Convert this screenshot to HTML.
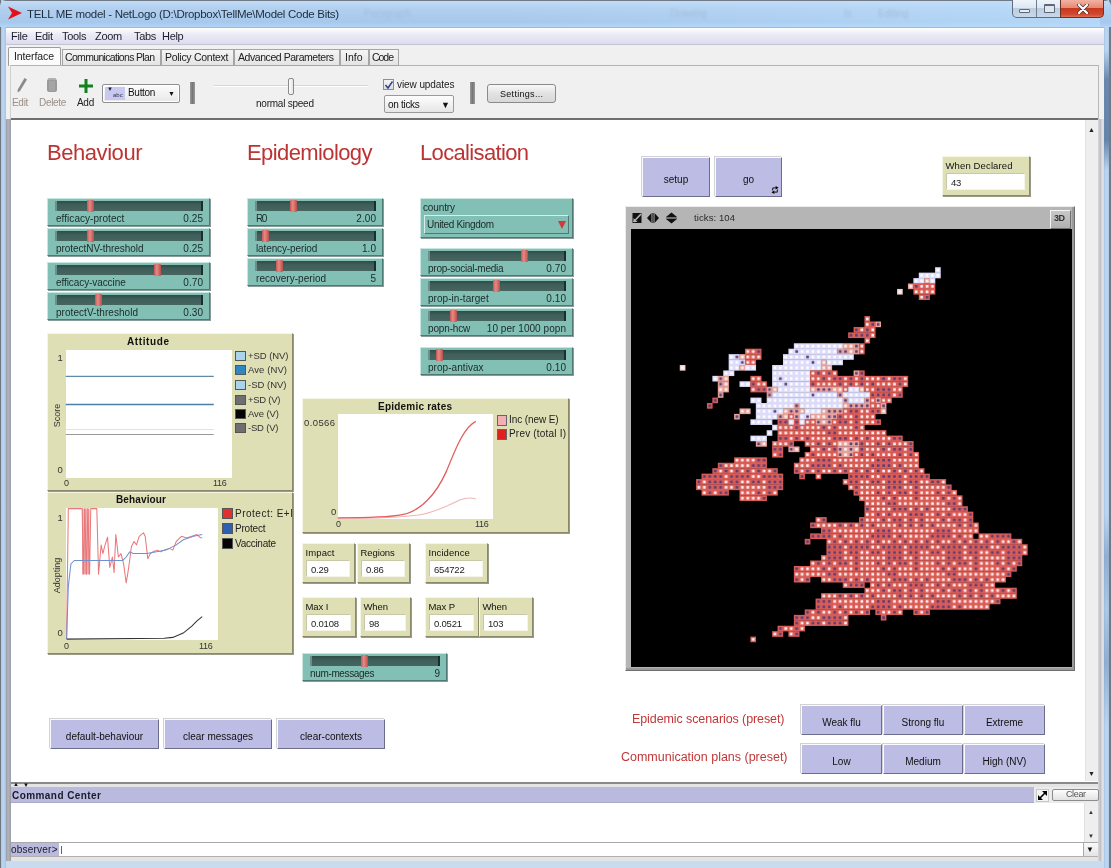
<!DOCTYPE html>
<html><head><meta charset="utf-8"><style>
*{box-sizing:border-box;margin:0;padding:0}
html,body{width:1111px;height:868px;overflow:hidden;background:#c9dcef;font-family:"Liberation Sans",sans-serif;font-size:10px;color:#000}
.a{position:absolute}
.t{position:absolute;white-space:nowrap;line-height:1}
.sl{position:absolute;background:#82bfb4;border:1px solid;border-color:#c9e6e0 #4f7a73 #4f7a73 #c9e6e0;box-shadow:1px 1px 0 #8a9a98}
.trk{position:absolute;background:linear-gradient(#2f4d48,#3f5f5a 40%,#46655f);border-left:2px solid #6f8e89;border-right:2px solid #1c2e2b}
.th{position:absolute;width:7px;background:linear-gradient(90deg,#c25858,#e68a84 40%,#d46b66 70%,#b55050);border-radius:1px}
.btn{position:absolute;background:#bcbce4;border:1px solid;border-color:#fafaff #6c6c8c #6c6c8c #fafaff;box-shadow:-1px -1px 0 #d2d2d2;text-align:center;font-size:10px;color:#111}
.mon{position:absolute;background:#dfdfb6;border:1px solid;border-color:#f6f6e4 #8a8a6a #8a8a6a #f6f6e4;box-shadow:1px 1px 0 #9a9a88}
.mval{position:absolute;background:#fff;border:1px solid;border-color:#c8c8a8 #f4f4e8 #f4f4e8 #c8c8a8}
.plot{position:absolute;background:#dfdfb6;border:1px solid;border-color:#f6f6e4 #8a8a6a #8a8a6a #f6f6e4;box-shadow:1px 1px 0 #9a9a88}
.pw{position:absolute;background:#fff}
.lg{position:absolute;width:11px;height:11px;border:1px solid #555}
</style></head><body>
<div style="position:absolute;left:0;top:0;width:1111px;height:868px;overflow:hidden;filter:blur(0.35px)">
<div class="a" style="left:0;top:0;width:1111px;height:868px;background:linear-gradient(90deg,#6f7680 0,#6f7680 1px,#a8c6e6 1px,#bcd8f4 3px,#a8c4e4 6px,transparent 6px,transparent 1104px,#a8c4e0 1104px,#bcd8f4 1106px,#b0cce8 1109px,#6f7a86 1109px)"></div>
<div class="a" style="left:0;top:0;width:1111px;height:27px;background:linear-gradient(#6f7a86 0,#6f7a86 1px,#c2dcf6 1px,#b2d0f0 8px,#a6c8ec 22px,#b4d4f4 27px);border-radius:6px 6px 0 0"></div>
<div class="a" style="left:500px;top:1px;width:600px;height:26px;background:linear-gradient(90deg,rgba(190,225,255,0),rgba(190,225,255,0.55))"></div>
<svg class="a" style="left:7px;top:5px" width="16" height="16" viewBox="0 0 16 16"><path d="M1 1.5 L15 8 L1 14.5 L5 8 Z" fill="#e3121a"/></svg>
<div class="t" style="left:27px;top:9px;font-size:11.5px;color:#1e2b3b;;letter-spacing:-0.286px">TELL ME model - NetLogo (D:\Dropbox\TellMe\Model Code Bits)</div>
<div class="a" style="left:1012px;top:0px;width:92px;height:18px;border:1px solid #5f6d7e;border-top:none;border-radius:0 0 5px 5px;background:linear-gradient(#eef4fa,#dde8f3 45%,#bccde0 50%,#c8d8ea)"></div>
<div class="a" style="left:1036px;top:0px;width:1px;height:17px;background:#6f7d8d"></div>
<div class="a" style="left:1060px;top:0px;width:44px;height:18px;border:1px solid #6a3226;border-top:none;border-radius:0 0 5px 0;background:linear-gradient(#f2b2a2,#e58a74 45%,#c8381e 50%,#d04a30 85%,#e07050)"></div>
<div class="a" style="left:1019px;top:9px;width:11px;height:4px;border:1px solid #5c6878;border-radius:1px;background:#e8ecf0"></div>
<div class="a" style="left:1044px;top:4px;width:11px;height:9px;border:1px solid #5c6878;border-top-width:2px;border-radius:1px;background:#dfe6ee"></div>
<svg class="a" style="left:1077px;top:4px" width="12" height="10" viewBox="0 0 12 10"><path d="M2 1 L10 9 M10 1 L2 9" stroke="#4a3030" stroke-width="3.6" stroke-linecap="round"/><path d="M2 1 L10 9 M10 1 L2 9" stroke="#fff" stroke-width="2.2" stroke-linecap="round"/></svg>
<div class="t" style="left:364px;top:9px;font-size:10px;color:#a4bfd8;filter:blur(1.3px);width:48px;overflow:hidden">Paragraph</div>
<div class="t" style="left:670px;top:9px;font-size:10px;color:#a4bfd8;filter:blur(1.3px);width:38px;overflow:hidden">Drawing</div>
<div class="t" style="left:844px;top:9px;font-size:10px;color:#a4bfd8;filter:blur(1.3px);width:8px;overflow:hidden">Is</div>
<div class="t" style="left:878px;top:9px;font-size:10px;color:#a4bfd8;filter:blur(1.3px);width:38px;overflow:hidden">Editing</div>
<div class="a" style="left:1104px;top:50px;width:5px;height:120px;background:linear-gradient(rgba(100,132,172,0),#6a88ae 25%,#6584ab 75%,rgba(100,132,172,0))"></div>
<div class="a" style="left:1104px;top:515px;width:5px;height:210px;background:linear-gradient(rgba(120,150,190,0),rgba(120,150,190,0.6) 20%,rgba(120,150,190,0.2) 45%,rgba(120,150,190,0.6) 70%,rgba(120,150,190,0))"></div>
<div class="a" style="left:6px;top:27px;width:1098px;height:18px;background:linear-gradient(#ffffff,#ebebf6 40%,#dcdcee);border-top:1px solid #aab6c4;border-bottom:1px solid #c3c3d4"></div>
<div class="t" style="left:11px;top:31px;font-size:11px;color:#1d1d2e;letter-spacing:-0.3px">File</div>
<div class="t" style="left:35px;top:31px;font-size:11px;color:#1d1d2e;letter-spacing:-0.3px">Edit</div>
<div class="t" style="left:62px;top:31px;font-size:11px;color:#1d1d2e;letter-spacing:-0.3px">Tools</div>
<div class="t" style="left:95px;top:31px;font-size:11px;color:#1d1d2e;letter-spacing:-0.3px">Zoom</div>
<div class="t" style="left:134px;top:31px;font-size:11px;color:#1d1d2e;letter-spacing:-0.3px">Tabs</div>
<div class="t" style="left:162px;top:31px;font-size:11px;color:#1d1d2e;letter-spacing:-0.3px">Help</div>
<div class="a" style="left:6px;top:45px;width:1098px;height:816px;background:#f0f0f0"></div>
<div class="a" style="left:6px;top:119px;width:5px;height:742px;background:linear-gradient(90deg,#9a9aa2,#b4b4bc 40%,#9c9ca4)"></div>
<div class="a" style="left:1098px;top:119px;width:6px;height:742px;background:linear-gradient(90deg,#d8d8dc,#bdbdc4 40%,#e2e2e6 70%,#dadadf)"></div>
<div class="a" style="left:62px;top:49px;width:99px;height:16px;border:1px solid #a5a5a5;border-bottom:none;background:linear-gradient(#f5f5f5,#e4e4e4)"></div>
<div class="t" style="left:65px;top:52px;font-size:10.5px;color:#202020;;letter-spacing:-0.675px">Communications Plan</div>
<div class="a" style="left:161px;top:49px;width:73px;height:16px;border:1px solid #a5a5a5;border-bottom:none;background:linear-gradient(#f5f5f5,#e4e4e4)"></div>
<div class="t" style="left:165px;top:52px;font-size:10.5px;color:#202020;;letter-spacing:-0.279px">Policy Context</div>
<div class="a" style="left:234px;top:49px;width:106px;height:16px;border:1px solid #a5a5a5;border-bottom:none;background:linear-gradient(#f5f5f5,#e4e4e4)"></div>
<div class="t" style="left:238px;top:52px;font-size:10.5px;color:#202020;;letter-spacing:-0.441px">Advanced Parameters</div>
<div class="a" style="left:340px;top:49px;width:29px;height:16px;border:1px solid #a5a5a5;border-bottom:none;background:linear-gradient(#f5f5f5,#e4e4e4)"></div>
<div class="t" style="left:345px;top:52px;font-size:10.5px;color:#202020;;letter-spacing:0.023px">Info</div>
<div class="a" style="left:369px;top:49px;width:30px;height:16px;border:1px solid #a5a5a5;border-bottom:none;background:linear-gradient(#f5f5f5,#e4e4e4)"></div>
<div class="t" style="left:372px;top:52px;font-size:10.5px;color:#202020;;letter-spacing:-1.036px">Code</div>
<div class="a" style="left:8px;top:47px;width:53px;height:19px;border:1px solid #9c9c9c;border-bottom:none;border-radius:2px 2px 0 0;background:#fbfbfb"></div>
<div class="t" style="left:14px;top:51px;font-size:10.5px;color:#202020;;letter-spacing:-0.111px">Interface</div>
<div class="a" style="left:10px;top:65px;width:1089px;height:54px;border-top:1px solid #b4b4b4;border-left:1px solid #d0d0d0;border-right:1px solid #b8b8b8;background:#f0f0f0"></div>
<div class="a" style="left:62px;top:65px;width:337px;height:1px;background:#a5a5a5"></div>
<svg class="a" style="left:15px;top:77px" width="13" height="16" viewBox="0 0 13 16"><path d="M9.5 1 L12 2.5 L5 14 L2.5 15.5 L2.8 12.5 Z" fill="#8a8a8a"/></svg>
<div class="t" style="left:12px;top:98px;font-size:10px;color:#9a8f86;letter-spacing:-0.3px">Edit</div>
<svg class="a" style="left:46px;top:77px" width="12" height="16" viewBox="0 0 12 16"><rect x="1" y="2" width="10" height="13" rx="2" fill="#9a9a9a"/><rect x="2" y="1" width="8" height="2" rx="1" fill="#b0b0b0"/><path d="M4 4 V14 M6 4 V14 M8 4 V14" stroke="#b8b8b8" stroke-width="0.8"/></svg>
<div class="t" style="left:39px;top:98px;font-size:10px;color:#9a8f86;letter-spacing:-0.3px">Delete</div>
<svg class="a" style="left:79px;top:79px" width="14" height="14" viewBox="0 0 14 14"><path d="M5.5 0 H8.5 V5.5 H14 V8.5 H8.5 V14 H5.5 V8.5 H0 V5.5 H5.5 Z" fill="#14801e"/></svg>
<div class="t" style="left:77px;top:98px;font-size:10px;color:#222;letter-spacing:-0.3px">Add</div>
<div class="a" style="left:102px;top:84px;width:78px;height:19px;border:1px solid #8f8f8f;border-radius:2px;background:linear-gradient(#fcfcfc,#e8e8e8);box-shadow:inset 0 0 0 1px #fff"></div>
<div class="a" style="left:105px;top:87px;width:20px;height:13px;background:#c8c8f0"></div>
<div class="t" style="left:107px;top:86px;font-size:6px;color:#223">&#9660;</div>
<div class="t" style="left:113px;top:92px;font-size:6px;color:#334;">abc</div>
<div class="t" style="left:128px;top:88px;font-size:10px;color:#111;letter-spacing:-0.3px">Button</div>
<div class="t" style="left:168px;top:90px;font-size:7px;color:#111">&#9660;</div>
<div class="a" style="left:190px;top:82px;width:5px;height:22px;background:linear-gradient(90deg,#9a9a9a,#777 50%,#999)"></div>
<div class="a" style="left:214px;top:85px;width:154px;height:2px;background:#d6d6d6;border-bottom:1px solid #fff"></div>
<div class="a" style="left:288px;top:78px;width:6px;height:17px;border:1px solid #8a8a8a;border-radius:2px;background:linear-gradient(90deg,#fff,#e4e4e4)"></div>
<div class="t" style="left:256px;top:99px;font-size:10px;color:#222;;letter-spacing:-0.236px">normal speed</div>
<div class="a" style="left:383px;top:79px;width:11px;height:11px;border:1px solid #8e8f8f;background:linear-gradient(#f4f4f4,#dedede)"></div>
<svg class="a" style="left:384px;top:80px" width="10" height="10" viewBox="0 0 10 10"><path d="M1.5 5 L4 8 L8.5 1.5" stroke="#2c3c8c" stroke-width="1.4" fill="none"/></svg>
<div class="t" style="left:397px;top:80px;font-size:10px;color:#222;;letter-spacing:-0.080px">view updates</div>
<div class="a" style="left:384px;top:95px;width:70px;height:18px;border:1px solid #9a9a9a;border-radius:2px;background:linear-gradient(#fdfdfd,#e6e6e6)"></div>
<div class="t" style="left:388px;top:100px;font-size:10px;color:#111;letter-spacing:-0.3px">on ticks</div>
<div class="t" style="left:441px;top:101px;font-size:9px;color:#111">&#9660;</div>
<div class="a" style="left:470px;top:82px;width:5px;height:22px;background:linear-gradient(90deg,#9a9a9a,#777 50%,#999)"></div>
<div class="a" style="left:487px;top:84px;width:69px;height:19px;border:1px solid #8a8a8a;border-radius:3px;background:linear-gradient(#f8f8f8,#e2e2e2 50%,#d8d8d8)"></div>
<div class="t" style="left:500px;top:90px;font-size:9px;color:#111;;letter-spacing:0.300px">Settings...</div>
<div class="a" style="left:11px;top:118px;width:1087px;height:664px;background:#fff;border-top:2px solid #6e6e6e"></div>
<div class="a" style="left:1085px;top:120px;width:13px;height:661px;background:#eeeeee;border-left:1px solid #e2e2e2"></div>
<div class="t" style="left:1088px;top:126px;font-size:7px;color:#222">&#9650;</div>
<div class="t" style="left:1088px;top:770px;font-size:7px;color:#222">&#9660;</div>
<div class="t" style="left:47px;top:142px;font-size:22px;color:#bd3333;;letter-spacing:-0.445px">Behaviour</div>
<div class="t" style="left:247px;top:142px;font-size:22px;color:#bd3333;;letter-spacing:-0.598px">Epidemiology</div>
<div class="t" style="left:420px;top:142px;font-size:22px;color:#bd3333;;letter-spacing:-0.653px">Localisation</div>
<div class="sl" style="left:47px;top:198px;width:163px;height:28px"></div>
<div class="trk" style="left:55px;top:201px;width:148px;height:10px"></div>
<div class="th" style="left:87px;top:200px;height:12px"></div>
<div class="t" style="left:56px;top:214px;font-size:10px;color:#1a2a28;letter-spacing:0.05px">efficacy-protect</div>
<div class="t" style="right:908px;top:214px;font-size:10px;color:#1a2a28;letter-spacing:0.05px">0.25</div>
<div class="sl" style="left:47px;top:228px;width:163px;height:28px"></div>
<div class="trk" style="left:55px;top:231px;width:148px;height:10px"></div>
<div class="th" style="left:87px;top:230px;height:12px"></div>
<div class="t" style="left:56px;top:244px;font-size:10px;color:#1a2a28;;letter-spacing:-0.049px">protectNV-threshold</div>
<div class="t" style="right:908px;top:244px;font-size:10px;color:#1a2a28;letter-spacing:0.05px">0.25</div>
<div class="sl" style="left:47px;top:262px;width:163px;height:28px"></div>
<div class="trk" style="left:55px;top:265px;width:148px;height:10px"></div>
<div class="th" style="left:154px;top:264px;height:12px"></div>
<div class="t" style="left:56px;top:278px;font-size:10px;color:#1a2a28;;letter-spacing:-0.084px">efficacy-vaccine</div>
<div class="t" style="right:908px;top:278px;font-size:10px;color:#1a2a28;letter-spacing:0.05px">0.70</div>
<div class="sl" style="left:47px;top:292px;width:163px;height:28px"></div>
<div class="trk" style="left:55px;top:295px;width:148px;height:10px"></div>
<div class="th" style="left:95px;top:294px;height:12px"></div>
<div class="t" style="left:56px;top:308px;font-size:10px;color:#1a2a28;letter-spacing:0.05px">protectV-threshold</div>
<div class="t" style="right:908px;top:308px;font-size:10px;color:#1a2a28;letter-spacing:0.05px">0.30</div>
<div class="sl" style="left:247px;top:198px;width:136px;height:28px"></div>
<div class="trk" style="left:255px;top:201px;width:121px;height:10px"></div>
<div class="th" style="left:290px;top:200px;height:12px"></div>
<div class="t" style="left:256px;top:214px;font-size:10px;color:#1a2a28;;letter-spacing:-1.481px">R0</div>
<div class="t" style="right:735px;top:214px;font-size:10px;color:#1a2a28;letter-spacing:0.05px">2.00</div>
<div class="sl" style="left:247px;top:228px;width:136px;height:28px"></div>
<div class="trk" style="left:255px;top:231px;width:121px;height:10px"></div>
<div class="th" style="left:262px;top:230px;height:12px"></div>
<div class="t" style="left:256px;top:244px;font-size:10px;color:#1a2a28;;letter-spacing:-0.116px">latency-period</div>
<div class="t" style="right:735px;top:244px;font-size:10px;color:#1a2a28;letter-spacing:0.05px">1.0</div>
<div class="sl" style="left:247px;top:258px;width:136px;height:28px"></div>
<div class="trk" style="left:255px;top:261px;width:121px;height:10px"></div>
<div class="th" style="left:276px;top:260px;height:12px"></div>
<div class="t" style="left:256px;top:274px;font-size:10px;color:#1a2a28;letter-spacing:0.05px">recovery-period</div>
<div class="t" style="right:735px;top:274px;font-size:10px;color:#1a2a28;letter-spacing:0.05px">5</div>
<div class="sl" style="left:420px;top:198px;width:153px;height:40px"></div>
<div class="t" style="left:423px;top:203px;font-size:10px;color:#1a2a28;;letter-spacing:-0.133px">country</div>
<div class="a" style="left:424px;top:215px;width:145px;height:19px;background:#82bfb4;border:1px solid;border-color:#d6eeea #4f7a73 #4f7a73 #d6eeea"></div>
<div class="t" style="left:427px;top:220px;font-size:10px;color:#1a2a28;;letter-spacing:-0.320px">United Kingdom</div>
<svg class="a" style="left:558px;top:221px" width="8" height="8" viewBox="0 0 8 8"><path d="M0 0 H8 L4 8 Z" fill="#d03a3a"/></svg>
<div class="sl" style="left:420px;top:248px;width:153px;height:28px"></div>
<div class="trk" style="left:428px;top:251px;width:138px;height:10px"></div>
<div class="th" style="left:521px;top:250px;height:12px"></div>
<div class="t" style="left:428px;top:264px;font-size:10px;color:#1a2a28;;letter-spacing:-0.242px">prop-social-media</div>
<div class="t" style="right:545px;top:264px;font-size:10px;color:#1a2a28;letter-spacing:0.05px">0.70</div>
<div class="sl" style="left:420px;top:278px;width:153px;height:28px"></div>
<div class="trk" style="left:428px;top:281px;width:138px;height:10px"></div>
<div class="th" style="left:493px;top:280px;height:12px"></div>
<div class="t" style="left:428px;top:294px;font-size:10px;color:#1a2a28;letter-spacing:0.05px">prop-in-target</div>
<div class="t" style="right:545px;top:294px;font-size:10px;color:#1a2a28;letter-spacing:0.05px">0.10</div>
<div class="sl" style="left:420px;top:308px;width:153px;height:28px"></div>
<div class="trk" style="left:428px;top:311px;width:138px;height:10px"></div>
<div class="th" style="left:450px;top:310px;height:12px"></div>
<div class="t" style="left:428px;top:324px;font-size:10px;color:#1a2a28;;letter-spacing:-0.151px">popn-hcw</div>
<div class="t" style="right:545px;top:324px;font-size:10px;color:#1a2a28;letter-spacing:0.05px">10 per 1000 popn</div>
<div class="sl" style="left:420px;top:347px;width:153px;height:28px"></div>
<div class="trk" style="left:428px;top:350px;width:138px;height:10px"></div>
<div class="th" style="left:436px;top:349px;height:12px"></div>
<div class="t" style="left:428px;top:363px;font-size:10px;color:#1a2a28;letter-spacing:0.05px">prop-antivax</div>
<div class="t" style="right:545px;top:363px;font-size:10px;color:#1a2a28;letter-spacing:0.05px">0.10</div>
<div class="sl" style="left:302px;top:653px;width:145px;height:28px"></div>
<div class="trk" style="left:310px;top:656px;width:130px;height:10px"></div>
<div class="th" style="left:361px;top:655px;height:12px"></div>
<div class="t" style="left:310px;top:669px;font-size:10px;color:#1a2a28;;letter-spacing:-0.351px">num-messages</div>
<div class="t" style="right:671px;top:669px;font-size:10px;color:#1a2a28;letter-spacing:0.05px">9</div>
<div class="btn" style="left:642px;top:157px;width:68px;height:40px;line-height:43px">setup</div>
<div class="btn" style="left:715px;top:157px;width:67px;height:40px;line-height:43px">go</div>
<svg class="a" style="left:771px;top:186px" width="8" height="8" viewBox="0 0 8 8"><path d="M1.6 4.5 V2.8 Q1.6 1.8 2.6 1.8 H4.8" stroke="#333" stroke-width="1.3" fill="none"/><path d="M4.6 0 L7.6 1.8 L4.6 3.6 Z" fill="#000"/><path d="M6.4 3.5 V5.2 Q6.4 6.2 5.4 6.2 H3.2" stroke="#333" stroke-width="1.3" fill="none"/><path d="M3.4 4.4 L0.4 6.2 L3.4 8 Z" fill="#000"/></svg>
<div class="mon" style="left:942px;top:156px;width:88px;height:40px"></div>
<div class="t" style="left:945.5px;top:161px;font-size:9.5px;color:#111;;letter-spacing:0.129px">When Declared</div>
<div class="mval" style="left:946px;top:173px;width:79px;height:17px"></div>
<div class="t" style="left:951px;top:178px;font-size:9.5px;color:#222;letter-spacing:-0.2px">43</div>
<div class="mon" style="left:302px;top:543px;width:53px;height:40px"></div>
<div class="t" style="left:305.5px;top:548px;font-size:9.5px;color:#111;;letter-spacing:0.100px">Impact</div>
<div class="mval" style="left:306px;top:560px;width:44px;height:17px"></div>
<div class="t" style="left:311px;top:565px;font-size:9.5px;color:#222;letter-spacing:-0.2px">0.29</div>
<div class="mon" style="left:357px;top:543px;width:53px;height:40px"></div>
<div class="t" style="left:360.5px;top:548px;font-size:9.5px;color:#111;letter-spacing:-0.1px">Regions</div>
<div class="mval" style="left:361px;top:560px;width:44px;height:17px"></div>
<div class="t" style="left:366px;top:565px;font-size:9.5px;color:#222;letter-spacing:-0.2px">0.86</div>
<div class="mon" style="left:425px;top:543px;width:63px;height:40px"></div>
<div class="t" style="left:428.5px;top:548px;font-size:9.5px;color:#111;;letter-spacing:0.080px">Incidence</div>
<div class="mval" style="left:429px;top:560px;width:54px;height:17px"></div>
<div class="t" style="left:434px;top:565px;font-size:9.5px;color:#222;letter-spacing:-0.2px">654722</div>
<div class="mon" style="left:302px;top:597px;width:54px;height:40px"></div>
<div class="t" style="left:305.5px;top:602px;font-size:9.5px;color:#111;letter-spacing:-0.1px">Max I</div>
<div class="mval" style="left:306px;top:614px;width:45px;height:17px"></div>
<div class="t" style="left:311px;top:619px;font-size:9.5px;color:#222;letter-spacing:-0.2px">0.0108</div>
<div class="mon" style="left:360px;top:597px;width:51px;height:40px"></div>
<div class="t" style="left:363.5px;top:602px;font-size:9.5px;color:#111;letter-spacing:-0.1px">When</div>
<div class="mval" style="left:364px;top:614px;width:42px;height:17px"></div>
<div class="t" style="left:369px;top:619px;font-size:9.5px;color:#222;letter-spacing:-0.2px">98</div>
<div class="mon" style="left:425px;top:597px;width:54px;height:40px"></div>
<div class="t" style="left:428.5px;top:602px;font-size:9.5px;color:#111;letter-spacing:-0.1px">Max P</div>
<div class="mval" style="left:429px;top:614px;width:45px;height:17px"></div>
<div class="t" style="left:434px;top:619px;font-size:9.5px;color:#222;letter-spacing:-0.2px">0.0521</div>
<div class="mon" style="left:479px;top:597px;width:54px;height:40px"></div>
<div class="t" style="left:482.5px;top:602px;font-size:9.5px;color:#111;letter-spacing:-0.1px">When</div>
<div class="mval" style="left:483px;top:614px;width:45px;height:17px"></div>
<div class="t" style="left:488px;top:619px;font-size:9.5px;color:#222;letter-spacing:-0.2px">103</div>
<div class="plot" style="left:47px;top:333px;width:246px;height:158px"></div>
<div class="t" style="left:127px;top:337px;font-size:10px;color:#111;;letter-spacing:0.605px;font-weight:bold">Attitude</div>
<div class="pw" style="left:66px;top:350px;width:166px;height:128px"></div>
<svg class="a" style="left:45px;top:340px" width="250" height="150" viewBox="0 0 1111 667" preserveAspectRatio="none"><path d="M92 162 H750" stroke="#5f8aa6" stroke-width="5" fill="none"/><path d="M92 287 H750" stroke="#4d7fa6" stroke-width="6" fill="none"/><path d="M92 398 H750" stroke="#cfe6f4" stroke-width="5" fill="none"/><path d="M92 420 H750" stroke="#9a9a9a" stroke-width="5" fill="none"/></svg>
<div class="lg" style="left:235px;top:351px;width:11px;height:10px;background:#aad4ee;border-color:#555"></div>
<div class="t" style="left:248px;top:351px;font-size:9.5px;color:#333;;letter-spacing:-0.058px">+SD (NV)</div>
<div class="lg" style="left:235px;top:365px;width:11px;height:10px;background:#2f86c0;border-color:#555"></div>
<div class="t" style="left:248px;top:365px;font-size:9.5px;color:#333;;letter-spacing:0.092px">Ave (NV)</div>
<div class="lg" style="left:235px;top:380px;width:11px;height:10px;background:#aad4ee;border-color:#555"></div>
<div class="t" style="left:248px;top:380px;font-size:9.5px;color:#333;;letter-spacing:-0.002px">-SD (NV)</div>
<div class="lg" style="left:235px;top:395px;width:11px;height:10px;background:#6f6f6f;border-color:#555"></div>
<div class="t" style="left:248px;top:395px;font-size:9.5px;color:#333;;letter-spacing:-0.258px">+SD (V)</div>
<div class="lg" style="left:235px;top:409px;width:11px;height:10px;background:#050505;border-color:#555"></div>
<div class="t" style="left:248px;top:409px;font-size:9.5px;color:#333;;letter-spacing:-0.083px">Ave (V)</div>
<div class="lg" style="left:235px;top:423px;width:11px;height:10px;background:#6f6f6f;border-color:#555"></div>
<div class="t" style="left:248px;top:423px;font-size:9.5px;color:#333;;letter-spacing:-0.193px">-SD (V)</div>
<div class="t" style="left:57.5px;top:353px;font-size:9.5px;color:#333;">1</div>
<div class="t" style="left:57.5px;top:465px;font-size:9.5px;color:#333;">0</div>
<div class="t" style="left:64px;top:479px;font-size:9px;color:#333;">0</div>
<div class="t" style="left:213px;top:479px;font-size:9px;color:#333;letter-spacing:-0.3px">116</div>
<div class="t" style="left:40px;top:411px;width:34px;text-align:center;font-size:9px;color:#333;transform:rotate(-90deg)">Score</div>
<div class="plot" style="left:47px;top:492px;width:246px;height:162px"></div>
<div class="t" style="left:116px;top:495px;font-size:10px;color:#111;;letter-spacing:0.137px;font-weight:bold">Behaviour</div>
<div class="pw" style="left:66px;top:508px;width:152px;height:132px"></div>
<svg class="a" style="left:45px;top:500px" width="180" height="150" viewBox="0 0 1042 868" preserveAspectRatio="none"><rect x="215" y="50" width="45" height="380" fill="#f6c8c8"/><path d="M218 50 V430 M228 50 V430 M235 50 V430 M243 50 V430 M252 50 V430" stroke="#e88888" stroke-width="4"/><path d="M125 805 L135 50 L215 50 L222 430 L230 50 L240 430 L248 50 L258 430 L265 50 L300 50 L310 430 L325 260 L335 310 L345 270 L362 215 L375 390 L390 330 L400 420 L410 200 L425 330 L440 310 L455 370 L470 480 L480 420 L490 350 L500 270 L515 240 L530 260 L545 210 L570 190 L580 210 L595 340 L610 310 L625 300 L650 290 L670 300 L690 290 L720 280 L740 290 L760 240 L790 210 L820 220 L850 210 L880 200 L895 215 L910 220" stroke="#e8787a" stroke-width="6" fill="none" stroke-linejoin="round"/><path d="M125 805 L135 500 L150 370 L170 350 L450 350 L470 330 L490 300 L510 310 L590 310 L700 290 L760 260 L800 230 L860 210 L910 200" stroke="#7090d0" stroke-width="6" fill="none"/><path d="M125 805 L690 800 L740 795 L800 770 L850 730 L880 700 L910 675" stroke="#333" stroke-width="6" fill="none"/></svg>
<div class="lg" style="left:222px;top:508px;width:11px;height:11px;background:#e03030;border-color:#555"></div>
<div class="t" style="left:235px;top:509px;font-size:10px;color:#222;width:57px;overflow:hidden;letter-spacing:0.496px">Protect: E+I</div>
<div class="lg" style="left:222px;top:523px;width:11px;height:11px;background:#2f5fb0;border-color:#555"></div>
<div class="t" style="left:235px;top:524px;font-size:10px;color:#222;width:57px;overflow:hidden;letter-spacing:-0.198px">Protect</div>
<div class="lg" style="left:222px;top:538px;width:11px;height:11px;background:#050505;border-color:#555"></div>
<div class="t" style="left:235px;top:539px;font-size:10px;color:#222;width:57px;overflow:hidden;letter-spacing:-0.273px">Vaccinate</div>
<div class="t" style="left:57.5px;top:513px;font-size:9.5px;color:#333;">1</div>
<div class="t" style="left:57.5px;top:628px;font-size:9.5px;color:#333;">0</div>
<div class="t" style="left:64px;top:642px;font-size:9px;color:#333;">0</div>
<div class="t" style="left:199px;top:642px;font-size:9px;color:#333;letter-spacing:-0.3px">116</div>
<div class="t" style="left:34px;top:571px;width:46px;text-align:center;font-size:9px;color:#333;transform:rotate(-90deg)">Adopting</div>
<div class="plot" style="left:302px;top:398px;width:267px;height:135px"></div>
<div class="t" style="left:378px;top:402px;font-size:10px;color:#111;;letter-spacing:0.219px;font-weight:bold">Epidemic rates</div>
<div class="pw" style="left:338px;top:414px;width:155px;height:105px"></div>
<svg class="a" style="left:290px;top:390px" width="290" height="150" viewBox="0 0 1111 575" preserveAspectRatio="none"><path d="M183 492 C300 492 420 490 500 478 C560 468 610 440 650 422 C675 412 695 412 712 418" stroke="#f0b4b4" stroke-width="4" fill="none"/><path d="M183 490 C300 490 380 488 430 478 C500 465 560 400 600 310 C640 210 670 140 712 120" stroke="#e06060" stroke-width="5" fill="none"/></svg>
<div class="lg" style="left:497px;top:415px;width:10px;height:11px;background:#f2b0b4;border-color:#666"></div>
<div class="lg" style="left:497px;top:429px;width:10px;height:11px;background:#e02020;border-color:#666"></div>
<div class="t" style="left:509px;top:415px;font-size:10px;color:#222;;letter-spacing:-0.098px">Inc (new E)</div>
<div class="t" style="left:509px;top:429px;font-size:10px;color:#222;;letter-spacing:0.195px">Prev (total I)</div>
<div class="t" style="left:304px;top:418px;font-size:9.5px;color:#333;;letter-spacing:0.391px">0.0566</div>
<div class="t" style="left:331px;top:507px;font-size:9.5px;color:#333;">0</div>
<div class="t" style="left:336px;top:520px;font-size:9px;color:#333;">0</div>
<div class="t" style="left:475px;top:520px;font-size:9px;color:#333;letter-spacing:-0.3px">116</div>
<div class="a" style="left:625px;top:206px;width:450px;height:465px;background:#b5b5b5;border:1px solid;border-color:#ececec #6f6f6f #6f6f6f #ececec;box-shadow:inset -2px -2px 0 #9a9a9a"></div>
<div class="a" style="left:631px;top:229px;width:441px;height:438px;background:#000"></div>
<svg class="a" style="left:632px;top:212px" width="48" height="13" viewBox="0 0 48 13"><rect x="0.5" y="1" width="9" height="10" fill="#111"/><path d="M1.5 10 L9 2" stroke="#b5b5b5" stroke-width="1.6"/><path d="M1.5 10 L1.5 6 L5.5 10 Z" fill="#b5b5b5"/><path d="M15 6 L19.5 1 L19.5 11 Z M27 6 L22.5 1 L22.5 11 Z" fill="#111"/><rect x="20" y="1" width="2" height="10" fill="#555"/><path d="M34 5 L39.5 0.5 L45 5 Z M34 7 L39.5 11.5 L45 7 Z" fill="#111"/><rect x="34" y="5.3" width="11" height="1.4" fill="#555"/></svg>
<div class="t" style="left:694px;top:213px;font-size:9.5px;color:#2a2a2a;;letter-spacing:0.097px">ticks: 104</div>
<div class="a" style="left:1050px;top:210px;width:21px;height:19px;background:linear-gradient(#c8c8c8,#b0b0b0);border:1px solid;border-color:#f4f4f4 #707070 #707070 #f4f4f4"></div>
<div class="t" style="left:1054px;top:214px;font-size:9px;color:#333;letter-spacing:-0.5px;font-weight:bold">3D</div>
<svg class="a" style="left:631px;top:229px" width="440" height="440" viewBox="0 -0.055 81 81" preserveAspectRatio="none"><defs><pattern id="dp" patternUnits="userSpaceOnUse" width="11" height="13"><path d="M0 0 H11 M0 1 H11 M0 2 H11 M0 3 H11 M0 4 H11 M0 5 H11 M0 6 H11 M0 7 H11 M0 8 H11 M0 9 H11 M0 10 H11 M0 11 H11 M0 12 H11 M0 0 V13 M1 0 V13 M2 0 V13 M3 0 V13 M4 0 V13 M5 0 V13 M6 0 V13 M7 0 V13 M8 0 V13 M9 0 V13 M10 0 V13 " stroke="rgba(150,40,40,0.18)" stroke-width="0.08" fill="none"/><rect x="0.26" y="0.26" width="0.48" height="0.48" fill="#fff4f2"/><rect x="0.26" y="1.26" width="0.48" height="0.48" fill="#fff4f2"/><rect x="0.26" y="2.26" width="0.48" height="0.48" fill="#5a3a78"/><rect x="0.26" y="3.26" width="0.48" height="0.48" fill="#fff4f2"/><rect x="0.26" y="4.26" width="0.48" height="0.48" fill="#5a3a78"/><rect x="0.26" y="5.26" width="0.48" height="0.48" fill="#fff4f2"/><rect x="0.26" y="6.26" width="0.48" height="0.48" fill="#fff4f2"/><rect x="0.26" y="7.26" width="0.48" height="0.48" fill="#5a3a78"/><rect x="0.26" y="8.26" width="0.48" height="0.48" fill="#fff4f2"/><rect x="0.26" y="9.26" width="0.48" height="0.48" fill="#fff4f2"/><rect x="0.26" y="10.26" width="0.48" height="0.48" fill="#fff4f2"/><rect x="0.26" y="11.26" width="0.48" height="0.48" fill="#fff4f2"/><rect x="0.26" y="12.26" width="0.48" height="0.48" fill="#fff4f2"/><rect x="1.26" y="0.26" width="0.48" height="0.48" fill="#5a3a78"/><rect x="1.26" y="1.26" width="0.48" height="0.48" fill="#fff4f2"/><rect x="1.26" y="2.26" width="0.48" height="0.48" fill="#fff4f2"/><rect x="1.26" y="3.26" width="0.48" height="0.48" fill="#5a3a78"/><rect x="1.26" y="4.26" width="0.48" height="0.48" fill="#5a3a78"/><rect x="1.26" y="5.26" width="0.48" height="0.48" fill="#5a3a78"/><rect x="1.26" y="6.26" width="0.48" height="0.48" fill="#fff4f2"/><rect x="1.26" y="7.26" width="0.48" height="0.48" fill="#5a3a78"/><rect x="1.26" y="8.26" width="0.48" height="0.48" fill="#fff4f2"/><rect x="1.26" y="9.26" width="0.48" height="0.48" fill="#5a3a78"/><rect x="1.26" y="10.26" width="0.48" height="0.48" fill="#fff4f2"/><rect x="1.26" y="11.26" width="0.48" height="0.48" fill="#fff4f2"/><rect x="1.26" y="12.26" width="0.48" height="0.48" fill="#fff4f2"/><rect x="2.26" y="0.26" width="0.48" height="0.48" fill="#fff4f2"/><rect x="2.26" y="1.26" width="0.48" height="0.48" fill="#5a3a78"/><rect x="2.26" y="2.26" width="0.48" height="0.48" fill="#fff4f2"/><rect x="2.26" y="3.26" width="0.48" height="0.48" fill="#5a3a78"/><rect x="2.26" y="4.26" width="0.48" height="0.48" fill="#5a3a78"/><rect x="2.26" y="5.26" width="0.48" height="0.48" fill="#fff4f2"/><rect x="2.26" y="6.26" width="0.48" height="0.48" fill="#5a3a78"/><rect x="2.26" y="7.26" width="0.48" height="0.48" fill="#fff4f2"/><rect x="2.26" y="8.26" width="0.48" height="0.48" fill="#fff4f2"/><rect x="2.26" y="9.26" width="0.48" height="0.48" fill="#fff4f2"/><rect x="2.26" y="10.26" width="0.48" height="0.48" fill="#5a3a78"/><rect x="2.26" y="11.26" width="0.48" height="0.48" fill="#fff4f2"/><rect x="2.26" y="12.26" width="0.48" height="0.48" fill="#fff4f2"/><rect x="3.26" y="0.26" width="0.48" height="0.48" fill="#5a3a78"/><rect x="3.26" y="1.26" width="0.48" height="0.48" fill="#fff4f2"/><rect x="3.26" y="2.26" width="0.48" height="0.48" fill="#fff4f2"/><rect x="3.26" y="3.26" width="0.48" height="0.48" fill="#5a3a78"/><rect x="3.26" y="4.26" width="0.48" height="0.48" fill="#5a3a78"/><rect x="3.26" y="5.26" width="0.48" height="0.48" fill="#fff4f2"/><rect x="3.26" y="6.26" width="0.48" height="0.48" fill="#5a3a78"/><rect x="3.26" y="7.26" width="0.48" height="0.48" fill="#5a3a78"/><rect x="3.26" y="8.26" width="0.48" height="0.48" fill="#5a3a78"/><rect x="3.26" y="9.26" width="0.48" height="0.48" fill="#5a3a78"/><rect x="3.26" y="10.26" width="0.48" height="0.48" fill="#fff4f2"/><rect x="3.26" y="11.26" width="0.48" height="0.48" fill="#5a3a78"/><rect x="3.26" y="12.26" width="0.48" height="0.48" fill="#fff4f2"/><rect x="4.26" y="0.26" width="0.48" height="0.48" fill="#fff4f2"/><rect x="4.26" y="1.26" width="0.48" height="0.48" fill="#5a3a78"/><rect x="4.26" y="2.26" width="0.48" height="0.48" fill="#fff4f2"/><rect x="4.26" y="3.26" width="0.48" height="0.48" fill="#fff4f2"/><rect x="4.26" y="4.26" width="0.48" height="0.48" fill="#fff4f2"/><rect x="4.26" y="5.26" width="0.48" height="0.48" fill="#5a3a78"/><rect x="4.26" y="6.26" width="0.48" height="0.48" fill="#5a3a78"/><rect x="4.26" y="7.26" width="0.48" height="0.48" fill="#5a3a78"/><rect x="4.26" y="8.26" width="0.48" height="0.48" fill="#5a3a78"/><rect x="4.26" y="9.26" width="0.48" height="0.48" fill="#fff4f2"/><rect x="4.26" y="10.26" width="0.48" height="0.48" fill="#5a3a78"/><rect x="4.26" y="11.26" width="0.48" height="0.48" fill="#5a3a78"/><rect x="4.26" y="12.26" width="0.48" height="0.48" fill="#5a3a78"/><rect x="5.26" y="0.26" width="0.48" height="0.48" fill="#fff4f2"/><rect x="5.26" y="1.26" width="0.48" height="0.48" fill="#5a3a78"/><rect x="5.26" y="2.26" width="0.48" height="0.48" fill="#5a3a78"/><rect x="5.26" y="3.26" width="0.48" height="0.48" fill="#fff4f2"/><rect x="5.26" y="4.26" width="0.48" height="0.48" fill="#5a3a78"/><rect x="5.26" y="5.26" width="0.48" height="0.48" fill="#fff4f2"/><rect x="5.26" y="6.26" width="0.48" height="0.48" fill="#5a3a78"/><rect x="5.26" y="7.26" width="0.48" height="0.48" fill="#5a3a78"/><rect x="5.26" y="8.26" width="0.48" height="0.48" fill="#5a3a78"/><rect x="5.26" y="9.26" width="0.48" height="0.48" fill="#5a3a78"/><rect x="5.26" y="10.26" width="0.48" height="0.48" fill="#fff4f2"/><rect x="5.26" y="11.26" width="0.48" height="0.48" fill="#fff4f2"/><rect x="5.26" y="12.26" width="0.48" height="0.48" fill="#5a3a78"/><rect x="6.26" y="0.26" width="0.48" height="0.48" fill="#fff4f2"/><rect x="6.26" y="1.26" width="0.48" height="0.48" fill="#fff4f2"/><rect x="6.26" y="2.26" width="0.48" height="0.48" fill="#fff4f2"/><rect x="6.26" y="3.26" width="0.48" height="0.48" fill="#fff4f2"/><rect x="6.26" y="4.26" width="0.48" height="0.48" fill="#fff4f2"/><rect x="6.26" y="5.26" width="0.48" height="0.48" fill="#5a3a78"/><rect x="6.26" y="6.26" width="0.48" height="0.48" fill="#fff4f2"/><rect x="6.26" y="7.26" width="0.48" height="0.48" fill="#fff4f2"/><rect x="6.26" y="8.26" width="0.48" height="0.48" fill="#fff4f2"/><rect x="6.26" y="9.26" width="0.48" height="0.48" fill="#5a3a78"/><rect x="6.26" y="10.26" width="0.48" height="0.48" fill="#fff4f2"/><rect x="6.26" y="11.26" width="0.48" height="0.48" fill="#fff4f2"/><rect x="6.26" y="12.26" width="0.48" height="0.48" fill="#5a3a78"/><rect x="7.26" y="0.26" width="0.48" height="0.48" fill="#5a3a78"/><rect x="7.26" y="1.26" width="0.48" height="0.48" fill="#5a3a78"/><rect x="7.26" y="2.26" width="0.48" height="0.48" fill="#5a3a78"/><rect x="7.26" y="3.26" width="0.48" height="0.48" fill="#fff4f2"/><rect x="7.26" y="4.26" width="0.48" height="0.48" fill="#fff4f2"/><rect x="7.26" y="5.26" width="0.48" height="0.48" fill="#fff4f2"/><rect x="7.26" y="6.26" width="0.48" height="0.48" fill="#5a3a78"/><rect x="7.26" y="7.26" width="0.48" height="0.48" fill="#5a3a78"/><rect x="7.26" y="8.26" width="0.48" height="0.48" fill="#fff4f2"/><rect x="7.26" y="9.26" width="0.48" height="0.48" fill="#fff4f2"/><rect x="7.26" y="10.26" width="0.48" height="0.48" fill="#fff4f2"/><rect x="7.26" y="11.26" width="0.48" height="0.48" fill="#fff4f2"/><rect x="7.26" y="12.26" width="0.48" height="0.48" fill="#fff4f2"/><rect x="8.26" y="0.26" width="0.48" height="0.48" fill="#5a3a78"/><rect x="8.26" y="1.26" width="0.48" height="0.48" fill="#fff4f2"/><rect x="8.26" y="2.26" width="0.48" height="0.48" fill="#fff4f2"/><rect x="8.26" y="3.26" width="0.48" height="0.48" fill="#fff4f2"/><rect x="8.26" y="4.26" width="0.48" height="0.48" fill="#fff4f2"/><rect x="8.26" y="5.26" width="0.48" height="0.48" fill="#5a3a78"/><rect x="8.26" y="6.26" width="0.48" height="0.48" fill="#5a3a78"/><rect x="8.26" y="7.26" width="0.48" height="0.48" fill="#5a3a78"/><rect x="8.26" y="8.26" width="0.48" height="0.48" fill="#5a3a78"/><rect x="8.26" y="9.26" width="0.48" height="0.48" fill="#5a3a78"/><rect x="8.26" y="10.26" width="0.48" height="0.48" fill="#5a3a78"/><rect x="8.26" y="11.26" width="0.48" height="0.48" fill="#fff4f2"/><rect x="8.26" y="12.26" width="0.48" height="0.48" fill="#5a3a78"/><rect x="9.26" y="0.26" width="0.48" height="0.48" fill="#5a3a78"/><rect x="9.26" y="1.26" width="0.48" height="0.48" fill="#5a3a78"/><rect x="9.26" y="2.26" width="0.48" height="0.48" fill="#5a3a78"/><rect x="9.26" y="3.26" width="0.48" height="0.48" fill="#fff4f2"/><rect x="9.26" y="4.26" width="0.48" height="0.48" fill="#fff4f2"/><rect x="9.26" y="5.26" width="0.48" height="0.48" fill="#fff4f2"/><rect x="9.26" y="6.26" width="0.48" height="0.48" fill="#5a3a78"/><rect x="9.26" y="7.26" width="0.48" height="0.48" fill="#fff4f2"/><rect x="9.26" y="8.26" width="0.48" height="0.48" fill="#fff4f2"/><rect x="9.26" y="9.26" width="0.48" height="0.48" fill="#fff4f2"/><rect x="9.26" y="10.26" width="0.48" height="0.48" fill="#fff4f2"/><rect x="9.26" y="11.26" width="0.48" height="0.48" fill="#fff4f2"/><rect x="9.26" y="12.26" width="0.48" height="0.48" fill="#fff4f2"/><rect x="10.26" y="0.26" width="0.48" height="0.48" fill="#fff4f2"/><rect x="10.26" y="1.26" width="0.48" height="0.48" fill="#fff4f2"/><rect x="10.26" y="2.26" width="0.48" height="0.48" fill="#fff4f2"/><rect x="10.26" y="3.26" width="0.48" height="0.48" fill="#fff4f2"/><rect x="10.26" y="4.26" width="0.48" height="0.48" fill="#fff4f2"/><rect x="10.26" y="5.26" width="0.48" height="0.48" fill="#5a3a78"/><rect x="10.26" y="6.26" width="0.48" height="0.48" fill="#5a3a78"/><rect x="10.26" y="7.26" width="0.48" height="0.48" fill="#fff4f2"/><rect x="10.26" y="8.26" width="0.48" height="0.48" fill="#fff4f2"/><rect x="10.26" y="9.26" width="0.48" height="0.48" fill="#fff4f2"/><rect x="10.26" y="10.26" width="0.48" height="0.48" fill="#fff4f2"/><rect x="10.26" y="11.26" width="0.48" height="0.48" fill="#fff4f2"/><rect x="10.26" y="12.26" width="0.48" height="0.48" fill="#5a3a78"/></pattern><pattern id="dl" patternUnits="userSpaceOnUse" width="13" height="11"><rect x="0.26" y="0.26" width="0.48" height="0.48" fill="#5a3a78"/><rect x="0.26" y="1.26" width="0.48" height="0.48" fill="#ffffff"/><rect x="0.26" y="2.26" width="0.48" height="0.48" fill="#ffffff"/><rect x="0.26" y="3.26" width="0.48" height="0.48" fill="#ffffff"/><rect x="0.26" y="4.26" width="0.48" height="0.48" fill="#ffffff"/><rect x="0.26" y="5.26" width="0.48" height="0.48" fill="#ffffff"/><rect x="0.26" y="6.26" width="0.48" height="0.48" fill="#ffffff"/><rect x="0.26" y="7.26" width="0.48" height="0.48" fill="#ffffff"/><rect x="0.26" y="8.26" width="0.48" height="0.48" fill="#ffffff"/><rect x="0.26" y="9.26" width="0.48" height="0.48" fill="#ffffff"/><rect x="0.26" y="10.26" width="0.48" height="0.48" fill="#ffffff"/><rect x="1.26" y="0.26" width="0.48" height="0.48" fill="#ffffff"/><rect x="1.26" y="1.26" width="0.48" height="0.48" fill="#ffffff"/><rect x="1.26" y="2.26" width="0.48" height="0.48" fill="#ffffff"/><rect x="1.26" y="3.26" width="0.48" height="0.48" fill="#ffffff"/><rect x="1.26" y="4.26" width="0.48" height="0.48" fill="#ffffff"/><rect x="1.26" y="5.26" width="0.48" height="0.48" fill="#5a3a78"/><rect x="1.26" y="6.26" width="0.48" height="0.48" fill="#ffffff"/><rect x="1.26" y="7.26" width="0.48" height="0.48" fill="#ffffff"/><rect x="1.26" y="8.26" width="0.48" height="0.48" fill="#ffffff"/><rect x="1.26" y="9.26" width="0.48" height="0.48" fill="#ffffff"/><rect x="1.26" y="10.26" width="0.48" height="0.48" fill="#ffffff"/><rect x="2.26" y="0.26" width="0.48" height="0.48" fill="#ffffff"/><rect x="2.26" y="1.26" width="0.48" height="0.48" fill="#ffffff"/><rect x="2.26" y="2.26" width="0.48" height="0.48" fill="#ffffff"/><rect x="2.26" y="3.26" width="0.48" height="0.48" fill="#ffffff"/><rect x="2.26" y="4.26" width="0.48" height="0.48" fill="#ffffff"/><rect x="2.26" y="5.26" width="0.48" height="0.48" fill="#ffffff"/><rect x="2.26" y="6.26" width="0.48" height="0.48" fill="#5a3a78"/><rect x="2.26" y="7.26" width="0.48" height="0.48" fill="#ffffff"/><rect x="2.26" y="8.26" width="0.48" height="0.48" fill="#ffffff"/><rect x="2.26" y="9.26" width="0.48" height="0.48" fill="#ffffff"/><rect x="2.26" y="10.26" width="0.48" height="0.48" fill="#ffffff"/><rect x="3.26" y="0.26" width="0.48" height="0.48" fill="#ffffff"/><rect x="3.26" y="1.26" width="0.48" height="0.48" fill="#ffffff"/><rect x="3.26" y="2.26" width="0.48" height="0.48" fill="#ffffff"/><rect x="3.26" y="3.26" width="0.48" height="0.48" fill="#ffffff"/><rect x="3.26" y="4.26" width="0.48" height="0.48" fill="#ffffff"/><rect x="3.26" y="5.26" width="0.48" height="0.48" fill="#ffffff"/><rect x="3.26" y="6.26" width="0.48" height="0.48" fill="#ffffff"/><rect x="3.26" y="7.26" width="0.48" height="0.48" fill="#ffffff"/><rect x="3.26" y="8.26" width="0.48" height="0.48" fill="#ffffff"/><rect x="3.26" y="9.26" width="0.48" height="0.48" fill="#ffffff"/><rect x="3.26" y="10.26" width="0.48" height="0.48" fill="#ffffff"/><rect x="4.26" y="0.26" width="0.48" height="0.48" fill="#5a3a78"/><rect x="4.26" y="1.26" width="0.48" height="0.48" fill="#ffffff"/><rect x="4.26" y="2.26" width="0.48" height="0.48" fill="#ffffff"/><rect x="4.26" y="3.26" width="0.48" height="0.48" fill="#ffffff"/><rect x="4.26" y="4.26" width="0.48" height="0.48" fill="#ffffff"/><rect x="4.26" y="5.26" width="0.48" height="0.48" fill="#ffffff"/><rect x="4.26" y="6.26" width="0.48" height="0.48" fill="#ffffff"/><rect x="4.26" y="7.26" width="0.48" height="0.48" fill="#ffffff"/><rect x="4.26" y="8.26" width="0.48" height="0.48" fill="#ffffff"/><rect x="4.26" y="9.26" width="0.48" height="0.48" fill="#ffffff"/><rect x="4.26" y="10.26" width="0.48" height="0.48" fill="#ffffff"/><rect x="5.26" y="0.26" width="0.48" height="0.48" fill="#ffffff"/><rect x="5.26" y="1.26" width="0.48" height="0.48" fill="#ffffff"/><rect x="5.26" y="2.26" width="0.48" height="0.48" fill="#ffffff"/><rect x="5.26" y="3.26" width="0.48" height="0.48" fill="#ffffff"/><rect x="5.26" y="4.26" width="0.48" height="0.48" fill="#ffffff"/><rect x="5.26" y="5.26" width="0.48" height="0.48" fill="#ffffff"/><rect x="5.26" y="6.26" width="0.48" height="0.48" fill="#ffffff"/><rect x="5.26" y="7.26" width="0.48" height="0.48" fill="#ffffff"/><rect x="5.26" y="8.26" width="0.48" height="0.48" fill="#ffffff"/><rect x="5.26" y="9.26" width="0.48" height="0.48" fill="#ffffff"/><rect x="5.26" y="10.26" width="0.48" height="0.48" fill="#ffffff"/><rect x="6.26" y="0.26" width="0.48" height="0.48" fill="#ffffff"/><rect x="6.26" y="1.26" width="0.48" height="0.48" fill="#5a3a78"/><rect x="6.26" y="2.26" width="0.48" height="0.48" fill="#ffffff"/><rect x="6.26" y="3.26" width="0.48" height="0.48" fill="#ffffff"/><rect x="6.26" y="4.26" width="0.48" height="0.48" fill="#ffffff"/><rect x="6.26" y="5.26" width="0.48" height="0.48" fill="#ffffff"/><rect x="6.26" y="6.26" width="0.48" height="0.48" fill="#ffffff"/><rect x="6.26" y="7.26" width="0.48" height="0.48" fill="#ffffff"/><rect x="6.26" y="8.26" width="0.48" height="0.48" fill="#ffffff"/><rect x="6.26" y="9.26" width="0.48" height="0.48" fill="#ffffff"/><rect x="6.26" y="10.26" width="0.48" height="0.48" fill="#ffffff"/><rect x="7.26" y="0.26" width="0.48" height="0.48" fill="#ffffff"/><rect x="7.26" y="1.26" width="0.48" height="0.48" fill="#ffffff"/><rect x="7.26" y="2.26" width="0.48" height="0.48" fill="#5a3a78"/><rect x="7.26" y="3.26" width="0.48" height="0.48" fill="#ffffff"/><rect x="7.26" y="4.26" width="0.48" height="0.48" fill="#ffffff"/><rect x="7.26" y="5.26" width="0.48" height="0.48" fill="#ffffff"/><rect x="7.26" y="6.26" width="0.48" height="0.48" fill="#ffffff"/><rect x="7.26" y="7.26" width="0.48" height="0.48" fill="#ffffff"/><rect x="7.26" y="8.26" width="0.48" height="0.48" fill="#5a3a78"/><rect x="7.26" y="9.26" width="0.48" height="0.48" fill="#ffffff"/><rect x="7.26" y="10.26" width="0.48" height="0.48" fill="#ffffff"/><rect x="8.26" y="0.26" width="0.48" height="0.48" fill="#ffffff"/><rect x="8.26" y="1.26" width="0.48" height="0.48" fill="#ffffff"/><rect x="8.26" y="2.26" width="0.48" height="0.48" fill="#ffffff"/><rect x="8.26" y="3.26" width="0.48" height="0.48" fill="#ffffff"/><rect x="8.26" y="4.26" width="0.48" height="0.48" fill="#ffffff"/><rect x="8.26" y="5.26" width="0.48" height="0.48" fill="#ffffff"/><rect x="8.26" y="6.26" width="0.48" height="0.48" fill="#ffffff"/><rect x="8.26" y="7.26" width="0.48" height="0.48" fill="#ffffff"/><rect x="8.26" y="8.26" width="0.48" height="0.48" fill="#ffffff"/><rect x="8.26" y="9.26" width="0.48" height="0.48" fill="#ffffff"/><rect x="8.26" y="10.26" width="0.48" height="0.48" fill="#ffffff"/><rect x="9.26" y="0.26" width="0.48" height="0.48" fill="#ffffff"/><rect x="9.26" y="1.26" width="0.48" height="0.48" fill="#ffffff"/><rect x="9.26" y="2.26" width="0.48" height="0.48" fill="#ffffff"/><rect x="9.26" y="3.26" width="0.48" height="0.48" fill="#ffffff"/><rect x="9.26" y="4.26" width="0.48" height="0.48" fill="#ffffff"/><rect x="9.26" y="5.26" width="0.48" height="0.48" fill="#ffffff"/><rect x="9.26" y="6.26" width="0.48" height="0.48" fill="#ffffff"/><rect x="9.26" y="7.26" width="0.48" height="0.48" fill="#ffffff"/><rect x="9.26" y="8.26" width="0.48" height="0.48" fill="#ffffff"/><rect x="9.26" y="9.26" width="0.48" height="0.48" fill="#ffffff"/><rect x="9.26" y="10.26" width="0.48" height="0.48" fill="#ffffff"/><rect x="10.26" y="0.26" width="0.48" height="0.48" fill="#ffffff"/><rect x="10.26" y="1.26" width="0.48" height="0.48" fill="#ffffff"/><rect x="10.26" y="2.26" width="0.48" height="0.48" fill="#ffffff"/><rect x="10.26" y="3.26" width="0.48" height="0.48" fill="#ffffff"/><rect x="10.26" y="4.26" width="0.48" height="0.48" fill="#ffffff"/><rect x="10.26" y="5.26" width="0.48" height="0.48" fill="#ffffff"/><rect x="10.26" y="6.26" width="0.48" height="0.48" fill="#ffffff"/><rect x="10.26" y="7.26" width="0.48" height="0.48" fill="#ffffff"/><rect x="10.26" y="8.26" width="0.48" height="0.48" fill="#ffffff"/><rect x="10.26" y="9.26" width="0.48" height="0.48" fill="#ffffff"/><rect x="10.26" y="10.26" width="0.48" height="0.48" fill="#ffffff"/><rect x="11.26" y="0.26" width="0.48" height="0.48" fill="#ffffff"/><rect x="11.26" y="1.26" width="0.48" height="0.48" fill="#ffffff"/><rect x="11.26" y="2.26" width="0.48" height="0.48" fill="#ffffff"/><rect x="11.26" y="3.26" width="0.48" height="0.48" fill="#ffffff"/><rect x="11.26" y="4.26" width="0.48" height="0.48" fill="#ffffff"/><rect x="11.26" y="5.26" width="0.48" height="0.48" fill="#ffffff"/><rect x="11.26" y="6.26" width="0.48" height="0.48" fill="#ffffff"/><rect x="11.26" y="7.26" width="0.48" height="0.48" fill="#ffffff"/><rect x="11.26" y="8.26" width="0.48" height="0.48" fill="#ffffff"/><rect x="11.26" y="9.26" width="0.48" height="0.48" fill="#ffffff"/><rect x="11.26" y="10.26" width="0.48" height="0.48" fill="#ffffff"/><rect x="12.26" y="0.26" width="0.48" height="0.48" fill="#ffffff"/><rect x="12.26" y="1.26" width="0.48" height="0.48" fill="#ffffff"/><rect x="12.26" y="2.26" width="0.48" height="0.48" fill="#ffffff"/><rect x="12.26" y="3.26" width="0.48" height="0.48" fill="#ffffff"/><rect x="12.26" y="4.26" width="0.48" height="0.48" fill="#ffffff"/><rect x="12.26" y="5.26" width="0.48" height="0.48" fill="#ffffff"/><rect x="12.26" y="6.26" width="0.48" height="0.48" fill="#ffffff"/><rect x="12.26" y="7.26" width="0.48" height="0.48" fill="#ffffff"/><rect x="12.26" y="8.26" width="0.48" height="0.48" fill="#ffffff"/><rect x="12.26" y="9.26" width="0.48" height="0.48" fill="#ffffff"/><rect x="12.26" y="10.26" width="0.48" height="0.48" fill="#ffffff"/></pattern></defs><rect x="55.98" y="6.98" width="1.04" height="1.04" fill="#dcdcfa"/><rect x="52.98" y="7.98" width="4.04" height="1.04" fill="#dcdcfa"/><rect x="51.98" y="8.98" width="2.04" height="1.04" fill="#dcdcfa"/><rect x="53.98" y="8.98" width="1.04" height="1.04" fill="#eaa8a0"/><rect x="54.98" y="8.98" width="1.04" height="1.04" fill="#dcdcfa"/><rect x="50.98" y="9.98" width="1.04" height="1.04" fill="#eaa8a0"/><rect x="51.98" y="9.98" width="4.04" height="1.04" fill="#dc5f58"/><rect x="48.98" y="10.98" width="1.04" height="1.04" fill="#f0d8d4"/><rect x="51.98" y="10.98" width="4.04" height="1.04" fill="#dc5f58"/><rect x="52.98" y="11.98" width="2.04" height="1.04" fill="#dc5f58"/><rect x="42.98" y="15.98" width="1.04" height="1.04" fill="#dc5f58"/><rect x="42.98" y="16.98" width="2.04" height="1.04" fill="#dc5f58"/><rect x="44.98" y="16.98" width="1.04" height="1.04" fill="#eaa8a0"/><rect x="40.98" y="17.98" width="4.04" height="1.04" fill="#dc5f58"/><rect x="39.98" y="18.98" width="5.04" height="1.04" fill="#dc5f58"/><rect x="42.98" y="19.98" width="1.04" height="1.04" fill="#dc5f58"/><rect x="29.98" y="20.98" width="9.04" height="1.04" fill="#dcdcfa"/><rect x="38.98" y="20.98" width="3.04" height="1.04" fill="#eaa8a0"/><rect x="41.98" y="20.98" width="1.04" height="1.04" fill="#dc5f58"/><rect x="20.98" y="21.98" width="3.04" height="1.04" fill="#dc5f58"/><rect x="28.98" y="21.98" width="9.04" height="1.04" fill="#dcdcfa"/><rect x="37.98" y="21.98" width="4.04" height="1.04" fill="#eaa8a0"/><rect x="41.98" y="21.98" width="1.04" height="1.04" fill="#dc5f58"/><rect x="17.98" y="22.98" width="2.04" height="1.04" fill="#dcdcfa"/><rect x="19.98" y="22.98" width="1.04" height="1.04" fill="#eaa8a0"/><rect x="20.98" y="22.98" width="3.04" height="1.04" fill="#dc5f58"/><rect x="27.98" y="22.98" width="13.04" height="1.04" fill="#dcdcfa"/><rect x="17.98" y="23.98" width="3.04" height="1.04" fill="#dcdcfa"/><rect x="20.98" y="23.98" width="2.04" height="1.04" fill="#dc5f58"/><rect x="27.98" y="23.98" width="7.04" height="1.04" fill="#dcdcfa"/><rect x="34.98" y="23.98" width="1.04" height="1.04" fill="#eaa8a0"/><rect x="35.98" y="23.98" width="3.04" height="1.04" fill="#dcdcfa"/><rect x="8.98" y="24.98" width="1.04" height="1.04" fill="#f0d8d4"/><rect x="17.98" y="24.98" width="2.04" height="1.04" fill="#dcdcfa"/><rect x="19.98" y="24.98" width="1.04" height="1.04" fill="#eaa8a0"/><rect x="20.98" y="24.98" width="2.04" height="1.04" fill="#dcdcfa"/><rect x="25.98" y="24.98" width="9.04" height="1.04" fill="#dcdcfa"/><rect x="34.98" y="24.98" width="2.04" height="1.04" fill="#eaa8a0"/><rect x="16.98" y="25.98" width="2.04" height="1.04" fill="#dcdcfa"/><rect x="25.98" y="25.98" width="7.04" height="1.04" fill="#dcdcfa"/><rect x="32.98" y="25.98" width="5.04" height="1.04" fill="#dc5f58"/><rect x="40.98" y="25.98" width="1.04" height="1.04" fill="#eaa8a0"/><rect x="41.98" y="25.98" width="1.04" height="1.04" fill="#dc5f58"/><rect x="14.98" y="26.98" width="1.04" height="1.04" fill="#dcdcfa"/><rect x="15.98" y="26.98" width="2.04" height="1.04" fill="#eaa8a0"/><rect x="21.98" y="26.98" width="2.04" height="1.04" fill="#dc5f58"/><rect x="25.98" y="26.98" width="7.04" height="1.04" fill="#dcdcfa"/><rect x="32.98" y="26.98" width="18.04" height="1.04" fill="#dc5f58"/><rect x="15.98" y="27.98" width="2.04" height="1.04" fill="#eaa8a0"/><rect x="19.98" y="27.98" width="2.04" height="1.04" fill="#dcdcfa"/><rect x="21.98" y="27.98" width="3.04" height="1.04" fill="#dc5f58"/><rect x="25.98" y="27.98" width="7.04" height="1.04" fill="#dcdcfa"/><rect x="32.98" y="27.98" width="18.04" height="1.04" fill="#dc5f58"/><rect x="15.98" y="28.98" width="2.04" height="1.04" fill="#eaa8a0"/><rect x="21.98" y="28.98" width="3.04" height="1.04" fill="#dc5f58"/><rect x="24.98" y="28.98" width="2.04" height="1.04" fill="#eaa8a0"/><rect x="26.98" y="28.98" width="6.04" height="1.04" fill="#dcdcfa"/><rect x="32.98" y="28.98" width="6.04" height="1.04" fill="#eaa8a0"/><rect x="38.98" y="28.98" width="1.04" height="1.04" fill="#dc5f58"/><rect x="39.98" y="28.98" width="2.04" height="1.04" fill="#dcdcfa"/><rect x="41.98" y="28.98" width="1.04" height="1.04" fill="#eaa8a0"/><rect x="42.98" y="28.98" width="7.04" height="1.04" fill="#dc5f58"/><rect x="15.98" y="29.98" width="1.04" height="1.04" fill="#eaa8a0"/><rect x="24.98" y="29.98" width="1.04" height="1.04" fill="#eaa8a0"/><rect x="25.98" y="29.98" width="12.04" height="1.04" fill="#dcdcfa"/><rect x="37.98" y="29.98" width="1.04" height="1.04" fill="#eaa8a0"/><rect x="38.98" y="29.98" width="5.04" height="1.04" fill="#dcdcfa"/><rect x="43.98" y="29.98" width="6.04" height="1.04" fill="#dc5f58"/><rect x="14.98" y="30.98" width="1.04" height="1.04" fill="#dc5f58"/><rect x="21.98" y="30.98" width="2.04" height="1.04" fill="#dcdcfa"/><rect x="24.98" y="30.98" width="14.04" height="1.04" fill="#dcdcfa"/><rect x="38.98" y="30.98" width="1.04" height="1.04" fill="#eaa8a0"/><rect x="39.98" y="30.98" width="3.04" height="1.04" fill="#dcdcfa"/><rect x="42.98" y="30.98" width="1.04" height="1.04" fill="#eaa8a0"/><rect x="43.98" y="30.98" width="1.04" height="1.04" fill="#dc5f58"/><rect x="44.98" y="30.98" width="1.04" height="1.04" fill="#eaa8a0"/><rect x="45.98" y="30.98" width="2.04" height="1.04" fill="#dc5f58"/><rect x="13.98" y="31.98" width="1.04" height="1.04" fill="#dc5f58"/><rect x="22.98" y="31.98" width="7.04" height="1.04" fill="#dcdcfa"/><rect x="29.98" y="31.98" width="1.04" height="1.04" fill="#eaa8a0"/><rect x="30.98" y="31.98" width="8.04" height="1.04" fill="#dcdcfa"/><rect x="38.98" y="31.98" width="5.04" height="1.04" fill="#eaa8a0"/><rect x="43.98" y="31.98" width="2.04" height="1.04" fill="#dc5f58"/><rect x="45.98" y="31.98" width="1.04" height="1.04" fill="#eaa8a0"/><rect x="19.98" y="32.98" width="2.04" height="1.04" fill="#eaa8a0"/><rect x="22.98" y="32.98" width="5.04" height="1.04" fill="#dcdcfa"/><rect x="27.98" y="32.98" width="4.04" height="1.04" fill="#eaa8a0"/><rect x="31.98" y="32.98" width="3.04" height="1.04" fill="#dcdcfa"/><rect x="34.98" y="32.98" width="4.04" height="1.04" fill="#eaa8a0"/><rect x="38.98" y="32.98" width="7.04" height="1.04" fill="#dc5f58"/><rect x="45.98" y="32.98" width="1.04" height="1.04" fill="#eaa8a0"/><rect x="18.98" y="33.98" width="1.04" height="1.04" fill="#eaa8a0"/><rect x="22.98" y="33.98" width="4.04" height="1.04" fill="#dcdcfa"/><rect x="26.98" y="33.98" width="2.04" height="1.04" fill="#eaa8a0"/><rect x="28.98" y="33.98" width="1.04" height="1.04" fill="#dc5f58"/><rect x="29.98" y="33.98" width="1.04" height="1.04" fill="#eaa8a0"/><rect x="30.98" y="33.98" width="2.04" height="1.04" fill="#dcdcfa"/><rect x="32.98" y="33.98" width="5.04" height="1.04" fill="#eaa8a0"/><rect x="37.98" y="33.98" width="7.04" height="1.04" fill="#dc5f58"/><rect x="21.98" y="34.98" width="4.04" height="1.04" fill="#dcdcfa"/><rect x="26.98" y="34.98" width="2.04" height="1.04" fill="#dc5f58"/><rect x="28.98" y="34.98" width="1.04" height="1.04" fill="#dcdcfa"/><rect x="29.98" y="34.98" width="1.04" height="1.04" fill="#dc5f58"/><rect x="30.98" y="34.98" width="1.04" height="1.04" fill="#dcdcfa"/><rect x="31.98" y="34.98" width="2.04" height="1.04" fill="#dc5f58"/><rect x="33.98" y="34.98" width="3.04" height="1.04" fill="#eaa8a0"/><rect x="36.98" y="34.98" width="9.04" height="1.04" fill="#dc5f58"/><rect x="25.98" y="35.98" width="1.04" height="1.04" fill="#dcdcfa"/><rect x="26.98" y="35.98" width="16.04" height="1.04" fill="#dc5f58"/><rect x="24.98" y="36.98" width="1.04" height="1.04" fill="#dcdcfa"/><rect x="26.98" y="36.98" width="20.04" height="1.04" fill="#dc5f58"/><rect x="21.98" y="37.98" width="3.04" height="1.04" fill="#dcdcfa"/><rect x="26.98" y="37.98" width="23.04" height="1.04" fill="#dc5f58"/><rect x="22.98" y="38.98" width="2.04" height="1.04" fill="#eaa8a0"/><rect x="25.98" y="38.98" width="4.04" height="1.04" fill="#dc5f58"/><rect x="31.98" y="38.98" width="6.04" height="1.04" fill="#dc5f58"/><rect x="37.98" y="38.98" width="4.04" height="1.04" fill="#eaa8a0"/><rect x="41.98" y="38.98" width="10.04" height="1.04" fill="#dc5f58"/><rect x="25.98" y="39.98" width="2.04" height="1.04" fill="#dc5f58"/><rect x="28.98" y="39.98" width="2.04" height="1.04" fill="#eaa8a0"/><rect x="32.98" y="39.98" width="5.04" height="1.04" fill="#dc5f58"/><rect x="37.98" y="39.98" width="4.04" height="1.04" fill="#eaa8a0"/><rect x="41.98" y="39.98" width="10.04" height="1.04" fill="#dc5f58"/><rect x="25.98" y="40.98" width="2.04" height="1.04" fill="#dc5f58"/><rect x="31.98" y="40.98" width="6.04" height="1.04" fill="#dc5f58"/><rect x="37.98" y="40.98" width="3.04" height="1.04" fill="#eaa8a0"/><rect x="40.98" y="40.98" width="12.04" height="1.04" fill="#dc5f58"/><rect x="18.98" y="41.98" width="6.04" height="1.04" fill="#dc5f58"/><rect x="30.98" y="41.98" width="22.04" height="1.04" fill="#dc5f58"/><rect x="15.98" y="42.98" width="9.04" height="1.04" fill="#dc5f58"/><rect x="29.98" y="42.98" width="23.04" height="1.04" fill="#dc5f58"/><rect x="14.98" y="43.98" width="12.04" height="1.04" fill="#dc5f58"/><rect x="29.98" y="43.98" width="24.04" height="1.04" fill="#dc5f58"/><rect x="12.98" y="44.98" width="15.04" height="1.04" fill="#dc5f58"/><rect x="30.98" y="44.98" width="1.04" height="1.04" fill="#dc5f58"/><rect x="33.98" y="44.98" width="1.04" height="1.04" fill="#dc5f58"/><rect x="39.98" y="44.98" width="15.04" height="1.04" fill="#dc5f58"/><rect x="11.98" y="45.98" width="16.04" height="1.04" fill="#dc5f58"/><rect x="38.98" y="45.98" width="19.04" height="1.04" fill="#dc5f58"/><rect x="11.98" y="46.98" width="16.04" height="1.04" fill="#dc5f58"/><rect x="39.98" y="46.98" width="19.04" height="1.04" fill="#dc5f58"/><rect x="12.98" y="47.98" width="5.04" height="1.04" fill="#dc5f58"/><rect x="19.98" y="47.98" width="7.04" height="1.04" fill="#dc5f58"/><rect x="40.98" y="47.98" width="19.04" height="1.04" fill="#dc5f58"/><rect x="19.98" y="48.98" width="5.04" height="1.04" fill="#dc5f58"/><rect x="41.98" y="48.98" width="19.04" height="1.04" fill="#dc5f58"/><rect x="42.98" y="49.98" width="18.04" height="1.04" fill="#dc5f58"/><rect x="42.98" y="50.98" width="19.04" height="1.04" fill="#dc5f58"/><rect x="42.98" y="51.98" width="20.04" height="1.04" fill="#dc5f58"/><rect x="33.98" y="52.98" width="2.04" height="1.04" fill="#dc5f58"/><rect x="41.98" y="52.98" width="21.04" height="1.04" fill="#dc5f58"/><rect x="32.98" y="53.98" width="31.04" height="1.04" fill="#dc5f58"/><rect x="34.98" y="54.98" width="29.04" height="1.04" fill="#dc5f58"/><rect x="32.98" y="55.98" width="30.04" height="1.04" fill="#dc5f58"/><rect x="63.98" y="55.98" width="6.04" height="1.04" fill="#dc5f58"/><rect x="31.98" y="56.98" width="1.04" height="1.04" fill="#dc5f58"/><rect x="35.98" y="56.98" width="36.04" height="1.04" fill="#dc5f58"/><rect x="35.98" y="57.98" width="37.04" height="1.04" fill="#dc5f58"/><rect x="35.98" y="58.98" width="37.04" height="1.04" fill="#dc5f58"/><rect x="34.98" y="59.98" width="37.04" height="1.04" fill="#dc5f58"/><rect x="32.98" y="60.98" width="39.04" height="1.04" fill="#dc5f58"/><rect x="29.98" y="61.98" width="41.04" height="1.04" fill="#dc5f58"/><rect x="29.98" y="62.98" width="40.04" height="1.04" fill="#dc5f58"/><rect x="29.98" y="63.98" width="3.04" height="1.04" fill="#dc5f58"/><rect x="34.98" y="63.98" width="34.04" height="1.04" fill="#dc5f58"/><rect x="38.98" y="64.98" width="4.04" height="1.04" fill="#dc5f58"/><rect x="43.98" y="64.98" width="23.04" height="1.04" fill="#dc5f58"/><rect x="42.98" y="65.98" width="28.04" height="1.04" fill="#dc5f58"/><rect x="34.98" y="66.98" width="36.04" height="1.04" fill="#dc5f58"/><rect x="33.98" y="67.98" width="34.04" height="1.04" fill="#dc5f58"/><rect x="33.98" y="68.98" width="32.04" height="1.04" fill="#dc5f58"/><rect x="31.98" y="69.98" width="12.04" height="1.04" fill="#dc5f58"/><rect x="44.98" y="69.98" width="5.04" height="1.04" fill="#dc5f58"/><rect x="51.98" y="69.98" width="3.04" height="1.04" fill="#dc5f58"/><rect x="29.98" y="70.98" width="10.04" height="1.04" fill="#dc5f58"/><rect x="45.98" y="70.98" width="1.04" height="1.04" fill="#dc5f58"/><rect x="29.98" y="71.98" width="10.04" height="1.04" fill="#dc5f58"/><rect x="26.98" y="72.98" width="5.04" height="1.04" fill="#dc5f58"/><rect x="25.98" y="73.98" width="2.04" height="1.04" fill="#dc5f58"/><rect x="28.98" y="73.98" width="2.04" height="1.04" fill="#dc5f58"/><rect x="21.98" y="74.98" width="1.04" height="1.04" fill="#dc5f58"/><g fill="url(#dp)"><rect x="54" y="9" width="1" height="1"/><rect x="51" y="10" width="1" height="1"/><rect x="52" y="10" width="4" height="1"/><rect x="49" y="11" width="1" height="1"/><rect x="52" y="11" width="4" height="1"/><rect x="53" y="12" width="2" height="1"/><rect x="43" y="16" width="1" height="1"/><rect x="43" y="17" width="2" height="1"/><rect x="45" y="17" width="1" height="1"/><rect x="41" y="18" width="4" height="1"/><rect x="40" y="19" width="5" height="1"/><rect x="43" y="20" width="1" height="1"/><rect x="39" y="21" width="3" height="1"/><rect x="42" y="21" width="1" height="1"/><rect x="21" y="22" width="3" height="1"/><rect x="38" y="22" width="4" height="1"/><rect x="42" y="22" width="1" height="1"/><rect x="20" y="23" width="1" height="1"/><rect x="21" y="23" width="3" height="1"/><rect x="21" y="24" width="2" height="1"/><rect x="35" y="24" width="1" height="1"/><rect x="9" y="25" width="1" height="1"/><rect x="20" y="25" width="1" height="1"/><rect x="35" y="25" width="2" height="1"/><rect x="33" y="26" width="5" height="1"/><rect x="41" y="26" width="1" height="1"/><rect x="42" y="26" width="1" height="1"/><rect x="16" y="27" width="2" height="1"/><rect x="22" y="27" width="2" height="1"/><rect x="33" y="27" width="18" height="1"/><rect x="16" y="28" width="2" height="1"/><rect x="22" y="28" width="3" height="1"/><rect x="33" y="28" width="18" height="1"/><rect x="16" y="29" width="2" height="1"/><rect x="22" y="29" width="3" height="1"/><rect x="25" y="29" width="2" height="1"/><rect x="33" y="29" width="6" height="1"/><rect x="39" y="29" width="1" height="1"/><rect x="42" y="29" width="1" height="1"/><rect x="43" y="29" width="7" height="1"/><rect x="16" y="30" width="1" height="1"/><rect x="25" y="30" width="1" height="1"/><rect x="38" y="30" width="1" height="1"/><rect x="44" y="30" width="6" height="1"/><rect x="15" y="31" width="1" height="1"/><rect x="39" y="31" width="1" height="1"/><rect x="43" y="31" width="1" height="1"/><rect x="44" y="31" width="1" height="1"/><rect x="45" y="31" width="1" height="1"/><rect x="46" y="31" width="2" height="1"/><rect x="14" y="32" width="1" height="1"/><rect x="30" y="32" width="1" height="1"/><rect x="39" y="32" width="5" height="1"/><rect x="44" y="32" width="2" height="1"/><rect x="46" y="32" width="1" height="1"/><rect x="20" y="33" width="2" height="1"/><rect x="28" y="33" width="4" height="1"/><rect x="35" y="33" width="4" height="1"/><rect x="39" y="33" width="7" height="1"/><rect x="46" y="33" width="1" height="1"/><rect x="19" y="34" width="1" height="1"/><rect x="27" y="34" width="2" height="1"/><rect x="29" y="34" width="1" height="1"/><rect x="30" y="34" width="1" height="1"/><rect x="33" y="34" width="5" height="1"/><rect x="38" y="34" width="7" height="1"/><rect x="27" y="35" width="2" height="1"/><rect x="30" y="35" width="1" height="1"/><rect x="32" y="35" width="2" height="1"/><rect x="34" y="35" width="3" height="1"/><rect x="37" y="35" width="9" height="1"/><rect x="27" y="36" width="16" height="1"/><rect x="27" y="37" width="20" height="1"/><rect x="27" y="38" width="23" height="1"/><rect x="23" y="39" width="2" height="1"/><rect x="26" y="39" width="4" height="1"/><rect x="32" y="39" width="6" height="1"/><rect x="38" y="39" width="4" height="1"/><rect x="42" y="39" width="10" height="1"/><rect x="26" y="40" width="2" height="1"/><rect x="29" y="40" width="2" height="1"/><rect x="33" y="40" width="5" height="1"/><rect x="38" y="40" width="4" height="1"/><rect x="42" y="40" width="10" height="1"/><rect x="26" y="41" width="2" height="1"/><rect x="32" y="41" width="6" height="1"/><rect x="38" y="41" width="3" height="1"/><rect x="41" y="41" width="12" height="1"/><rect x="19" y="42" width="6" height="1"/><rect x="31" y="42" width="22" height="1"/><rect x="16" y="43" width="9" height="1"/><rect x="30" y="43" width="23" height="1"/><rect x="15" y="44" width="12" height="1"/><rect x="30" y="44" width="24" height="1"/><rect x="13" y="45" width="15" height="1"/><rect x="31" y="45" width="1" height="1"/><rect x="34" y="45" width="1" height="1"/><rect x="40" y="45" width="15" height="1"/><rect x="12" y="46" width="16" height="1"/><rect x="39" y="46" width="19" height="1"/><rect x="12" y="47" width="16" height="1"/><rect x="40" y="47" width="19" height="1"/><rect x="13" y="48" width="5" height="1"/><rect x="20" y="48" width="7" height="1"/><rect x="41" y="48" width="19" height="1"/><rect x="20" y="49" width="5" height="1"/><rect x="42" y="49" width="19" height="1"/><rect x="43" y="50" width="18" height="1"/><rect x="43" y="51" width="19" height="1"/><rect x="43" y="52" width="20" height="1"/><rect x="34" y="53" width="2" height="1"/><rect x="42" y="53" width="21" height="1"/><rect x="33" y="54" width="31" height="1"/><rect x="35" y="55" width="29" height="1"/><rect x="33" y="56" width="30" height="1"/><rect x="64" y="56" width="6" height="1"/><rect x="32" y="57" width="1" height="1"/><rect x="36" y="57" width="36" height="1"/><rect x="36" y="58" width="37" height="1"/><rect x="36" y="59" width="37" height="1"/><rect x="35" y="60" width="37" height="1"/><rect x="33" y="61" width="39" height="1"/><rect x="30" y="62" width="41" height="1"/><rect x="30" y="63" width="40" height="1"/><rect x="30" y="64" width="3" height="1"/><rect x="35" y="64" width="34" height="1"/><rect x="39" y="65" width="4" height="1"/><rect x="44" y="65" width="23" height="1"/><rect x="43" y="66" width="28" height="1"/><rect x="35" y="67" width="36" height="1"/><rect x="34" y="68" width="34" height="1"/><rect x="34" y="69" width="32" height="1"/><rect x="32" y="70" width="12" height="1"/><rect x="45" y="70" width="5" height="1"/><rect x="52" y="70" width="3" height="1"/><rect x="30" y="71" width="10" height="1"/><rect x="46" y="71" width="1" height="1"/><rect x="30" y="72" width="10" height="1"/><rect x="27" y="73" width="5" height="1"/><rect x="26" y="74" width="2" height="1"/><rect x="29" y="74" width="2" height="1"/><rect x="22" y="75" width="1" height="1"/></g><g fill="url(#dl)"><rect x="56" y="7" width="1" height="1"/><rect x="53" y="8" width="4" height="1"/><rect x="52" y="9" width="2" height="1"/><rect x="55" y="9" width="1" height="1"/><rect x="30" y="21" width="9" height="1"/><rect x="29" y="22" width="9" height="1"/><rect x="18" y="23" width="2" height="1"/><rect x="28" y="23" width="13" height="1"/><rect x="18" y="24" width="3" height="1"/><rect x="28" y="24" width="7" height="1"/><rect x="36" y="24" width="3" height="1"/><rect x="18" y="25" width="2" height="1"/><rect x="21" y="25" width="2" height="1"/><rect x="26" y="25" width="9" height="1"/><rect x="17" y="26" width="2" height="1"/><rect x="26" y="26" width="7" height="1"/><rect x="15" y="27" width="1" height="1"/><rect x="26" y="27" width="7" height="1"/><rect x="20" y="28" width="2" height="1"/><rect x="26" y="28" width="7" height="1"/><rect x="27" y="29" width="6" height="1"/><rect x="40" y="29" width="2" height="1"/><rect x="26" y="30" width="12" height="1"/><rect x="39" y="30" width="5" height="1"/><rect x="22" y="31" width="2" height="1"/><rect x="25" y="31" width="14" height="1"/><rect x="40" y="31" width="3" height="1"/><rect x="23" y="32" width="7" height="1"/><rect x="31" y="32" width="8" height="1"/><rect x="23" y="33" width="5" height="1"/><rect x="32" y="33" width="3" height="1"/><rect x="23" y="34" width="4" height="1"/><rect x="31" y="34" width="2" height="1"/><rect x="22" y="35" width="4" height="1"/><rect x="29" y="35" width="1" height="1"/><rect x="31" y="35" width="1" height="1"/><rect x="26" y="36" width="1" height="1"/><rect x="25" y="37" width="1" height="1"/><rect x="22" y="38" width="3" height="1"/></g></svg>
<div class="btn" style="left:50px;top:719px;width:109px;height:30px;line-height:33px">default-behaviour</div>
<div class="btn" style="left:164px;top:719px;width:108px;height:30px;line-height:33px">clear messages</div>
<div class="btn" style="left:277px;top:719px;width:108px;height:30px;line-height:33px">clear-contexts</div>
<div class="btn" style="left:801px;top:705px;width:81px;height:30px;line-height:33px">Weak flu</div>
<div class="btn" style="left:883px;top:705px;width:80px;height:30px;line-height:33px">Strong flu</div>
<div class="btn" style="left:964px;top:705px;width:81px;height:30px;line-height:33px">Extreme</div>
<div class="btn" style="left:801px;top:744px;width:81px;height:30px;line-height:33px">Low</div>
<div class="btn" style="left:883px;top:744px;width:80px;height:30px;line-height:33px">Medium</div>
<div class="btn" style="left:964px;top:744px;width:81px;height:30px;line-height:33px">High (NV)</div>
<div class="t" style="left:632px;top:713px;font-size:12.5px;color:#c03838;;letter-spacing:-0.093px">Epidemic scenarios (preset)</div>
<div class="t" style="left:621px;top:751px;font-size:12.5px;color:#c03838;;letter-spacing:-0.008px">Communication plans (preset)</div>
<div class="a" style="left:11px;top:782px;width:1087px;height:79px;background:#e4e4e4;border-top:2px solid #8a8a8a"></div>
<div class="t" style="left:13px;top:781px;font-size:6px;color:#111">&#9650;</div>
<div class="t" style="left:23px;top:782px;font-size:6px;color:#111">&#9660;</div>
<div class="a" style="left:11px;top:787px;width:1087px;height:16px;background:#babade;border-bottom:1px solid #a8a8c8"></div>
<div class="t" style="left:12px;top:791px;font-size:10px;color:#1a1a2a;;letter-spacing:0.435px;font-weight:bold">Command Center</div>
<div class="a" style="left:1034px;top:787px;width:64px;height:16px;background:#ebebeb"></div>
<svg class="a" style="left:1036px;top:789px" width="13" height="13" viewBox="0 0 13 13"><rect x="0.5" y="0.5" width="12" height="12" fill="#f4f4f4" stroke="#c8c8c8"/><path d="M3.5 9.5 L9.5 3.5" stroke="#000" stroke-width="1.6"/><path d="M6 2 H11 V7 Z M2 6 V11 H7 Z" fill="#000"/></svg>
<div class="a" style="left:1052px;top:789px;width:47px;height:12px;border:1px solid #8c8c8c;border-radius:2px;background:linear-gradient(#fdfdfd,#e2e2e2)"></div>
<div class="t" style="left:1066px;top:790px;font-size:9px;color:#555;;letter-spacing:-0.375px">Clear</div>
<div class="a" style="left:11px;top:803px;width:1087px;height:39px;background:#fff"></div>
<div class="a" style="left:1084px;top:803px;width:14px;height:39px;background:#eeeeee;border-left:1px solid #e0e0e0"></div>
<div class="t" style="left:1088px;top:809px;font-size:6px;color:#333">&#9650;</div>
<div class="t" style="left:1088px;top:833px;font-size:6px;color:#333">&#9660;</div>
<div class="a" style="left:11px;top:842px;width:1087px;height:15px;background:#fff;border-top:1px solid #a8a8a8;border-bottom:1px solid #b0b0b0"></div>
<div class="a" style="left:11px;top:843px;width:48px;height:13px;background:#babade"></div>
<div class="t" style="left:11px;top:845px;font-size:10px;color:#1a1a2a;;letter-spacing:0.219px">observer&gt;</div>
<div class="a" style="left:61px;top:846px;width:1px;height:8px;background:#666"></div>
<div class="a" style="left:1083px;top:843px;width:15px;height:13px;background:linear-gradient(#fafafa,#e4e4e4);border-left:1px solid #aaa"></div>
<div class="t" style="left:1086px;top:846px;font-size:8px;color:#111">&#9660;</div>
</div>
</body></html>
